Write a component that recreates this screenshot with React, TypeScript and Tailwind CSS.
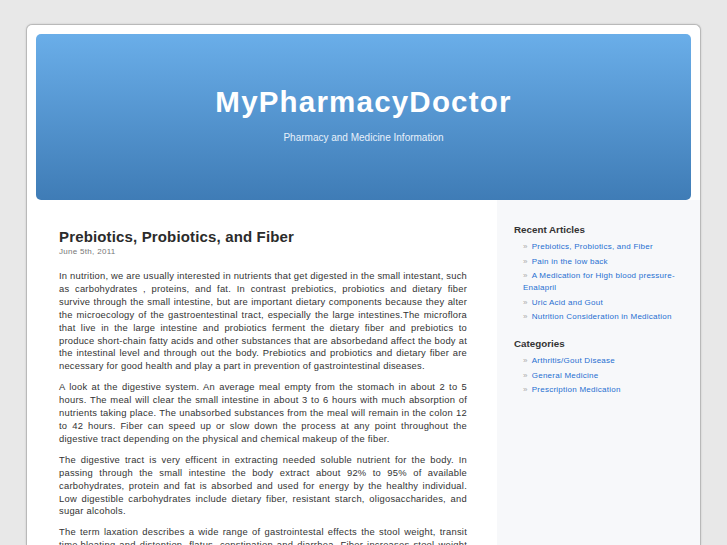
import { ReactNode } from 'react'

const paragraphs: ReactNode[] = [
  <>
    In nutrition, we are usually interested in nutrients that get digested in the small intestant, such as
    carbohydrates , proteins, and fat. In contrast prebiotics, probiotics and dietary fiber{' '}
    <span className="whitespace-nowrap">survive through</span> the small intestine, but are important dietary
    components because they alter the microecology of the gastroentestinal tract, especially the large
    intestines.The microflora that live in the large intestine and probiotics ferment the dietary fiber and
    prebiotics to produce short-chain fatty acids and other substances that are absorbedand affect the body at the
    intestinal level and through out the body. Prebiotics and probiotics and dietary fiber are necessary for good
    health and play a part in prevention of gastrointestinal diseases.
  </>,
  'A look at the digestive system. An average meal empty from the stomach in about 2 to 5 hours. The meal will clear the small intestine in about 3 to 6 hours with much absorption of nutrients taking place. The unabsorbed substances from the meal will remain in the colon 12 to 42 hours. Fiber can speed up or slow down the process at any point throughout the digestive tract depending on the physical and chemical makeup of the fiber.',
  'The digestive tract is very efficent in extracting needed soluble nutrient for the body. In passing through the small intestine the body extract about 92% to 95% of available carbohydrates, protein and fat is absorbed and used for energy by the healthy individual. Low digestible carbohydrates include dietary fiber, resistant starch, oligosaccharides, and sugar alcohols.',
  'The term laxation describes a wide range of gastrointestal effects the stool weight, transit time,bloating and distention, flatus, constipation and diarrhea. Fiber increases stool weight and decreases transit time.',
]

const recent = [
  'Prebiotics, Probiotics, and Fiber',
  'Pain in the low back',
  'A Medication for High blood pressure-Enalapril',
  'Uric Acid and Gout',
  'Nutrition Consideration in Medication',
]

const categories = ['Arthritis/Gout Disease', 'General Medicine', 'Prescription Medication']

function LinkList({ items }: { items: string[] }) {
  return (
    <ul className="mt-[5px] flex flex-col gap-[2.5px] pl-[9px]">
      {items.map((item) => (
        <li key={item} className="text-[8px] leading-[12px] tracking-[0.25px] text-[#1f6fd1]">
          <span className="mr-[4px] text-[#aaa]">»</span>
          {item}
        </li>
      ))}
    </ul>
  )
}

export default function App() {
  return (
    <div
      className="min-h-[545px] bg-[#e8e8e8] pt-[24px]"
      style={{ fontFamily: '"Liberation Sans", Arial, sans-serif' }}
    >
      <div className="mx-auto h-[521px] w-[675px] overflow-hidden rounded-t-[6px] border border-b-0 border-[#b9b9b9] bg-white shadow-[0_0_2px_rgba(0,0,0,0.15)]">
        <div className="px-[9px] pt-[9px]">
          <header className="flex h-[166px] flex-col items-center rounded-[5px] bg-gradient-to-b from-[#6aaee9] to-[#3f7cb6] pt-[52px]">
            <h1 className="text-[29.5px] font-bold leading-[32px] tracking-[1.2px] text-white">
              MyPharmacyDoctor
            </h1>
            <p className="mt-[12px] text-[10px] text-[#e8f1fb]">Pharmacy and Medicine Information</p>
          </header>
        </div>
        <div className="flex">
          <main className="w-[470px] pl-[32px] pr-[30px] pt-[28px]">
            <h2 className="text-[15px] font-bold leading-[18px] tracking-[0.15px] text-[#2b2b2b]">
              Prebiotics, Probiotics, and Fiber
            </h2>
            <p className="mt-[1px] text-[8px] leading-[10px] tracking-[0.3px] text-[#777]">June 5th, 2011</p>
            <div className="mt-[13px] flex flex-col gap-[8px]">
              {paragraphs.map((p, i) => (
                <p
                  key={i}
                  className={
                    i === 0
                      ? 'text-justify text-[9.4px] leading-[12.9px] tracking-[0.22px] text-[#333]'
                      : 'text-justify text-[9.4px] leading-[12.9px] tracking-[0.245px] text-[#333]'
                  }
                >
                  {p}
                </p>
              ))}
            </div>
          </main>
          <aside className="h-[400px] flex-1 bg-[#f7f8fa] pl-[17px] pr-[12px] pt-[24px]">
            <h3 className="text-[9.8px] font-bold leading-[12px] text-[#333]">Recent Articles</h3>
            <LinkList items={recent} />
            <h3 className="mt-[15px] text-[9.8px] font-bold leading-[12px] text-[#333]">Categories</h3>
            <LinkList items={categories} />
          </aside>
        </div>
      </div>
    </div>
  )
}
